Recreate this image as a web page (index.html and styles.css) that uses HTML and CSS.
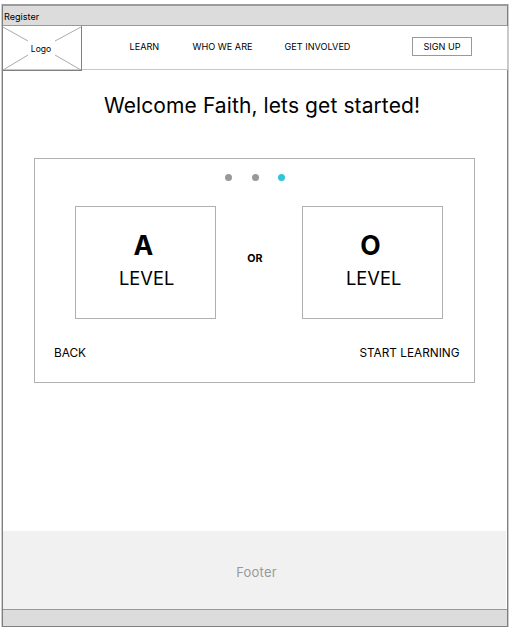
FILE: index.html
```html
<!DOCTYPE html>
<html lang="en">
<head>
<meta charset="utf-8">
<title>Register</title>
<link rel="stylesheet" href="styles.css">
</head>
<body>
<div class="window">
  <div class="titlebar"><span>Register</span></div>
  <header class="header">
    <div class="logo">
      <svg class="logo-cross" width="78" height="43" viewBox="0 0 78 43">
        <path d="M0 0L25 14M52 14L78 0M0 43L25 28M52 28L78 43"/>
      </svg>
      <span class="logo-text">Logo</span>
    </div>
    <nav class="nav">
      <a class="learn">LEARN</a>
      <a class="who">WHO WE ARE</a>
      <a class="involved">GET INVOLVED</a>
    </nav>
    <a class="signup">SIGN UP</a>
  </header>
  <main class="main">
    <h1>Welcome Faith, lets get started!</h1>
    <section class="panel">
      <div class="dots"><i></i><i></i><i class="active"></i></div>
      <div class="choices">
        <div class="choice"><b>A</b><span>LEVEL</span></div>
        <strong class="or">OR</strong>
        <div class="choice"><b>O</b><span>LEVEL</span></div>
      </div>
      <div class="actions"><a class="back">BACK</a><a class="start">START LEARNING</a></div>
    </section>
  </main>
  <footer class="footer"><span>Footer</span></footer>
  <div class="statusbar"></div>
</div>
</body>
</html>
```
FILE: styles.css
```css
* { box-sizing: border-box; }
body {
  margin: 0;
  padding: 4px 0 0 2px;
  background: #fff;
  color: #000;
  font-family: Inter, "Liberation Sans", sans-serif;
}
.window {
  width: 506px;
  height: 623px;
  border: 1px solid #7f7f7f;
  border-top: 2px solid #9c9c9c;
  box-shadow: -1px 0 #ccc, 1px 0 #ccc;
  display: flex;
  flex-direction: column;
}
.titlebar {
  flex: none;
  height: 20px;
  background: #dcdcdc;
  border-bottom: 1px solid #999;
  padding: 5px 0 0 1px;
  font-size: 9.1px;
  line-height: 12px;
}
.header {
  flex: none;
  height: 44px;
  margin: 0 -1px;
  background: #fff;
  border-bottom: 1px solid #c8c8c8;
  border-right: 1px solid #c8c8c8;
  display: flex;
  font-size: 9.15px;
  line-height: 12px;
  white-space: nowrap;
}
.logo {
  flex: none;
  display: grid;
  place-items: center;
  width: 80px;
  height: 45px;
  border: 1px solid #808080;
  border-top: 0;
}
.logo > * { grid-area: 1 / 1; }
.logo-cross { display: block; fill: none; stroke: #aaa; stroke-width: 1; }
.logo-text { font-size: 8.6px; padding: 2px 2px 0 0; }
.nav { display: flex; width: 330px; padding: 15px 0 0 47.5px; }
.learn { width: 63px; }
.who { width: 92px; }
.signup {
  width: 60px;
  height: 19px;
  margin-top: 11px;
  border: 1px solid #999;
  line-height: 18px;
  text-align: center;
}
.main { flex: none; height: 461px; }
h1 {
  margin: 23px 0 0 101px;
  font-size: 21px;
  letter-spacing: 0.1px;
  line-height: 26px;
  font-weight: 400;
  white-space: nowrap;
}
.panel {
  width: 441px;
  height: 225px;
  margin: 39px 0 0 31px;
  border: 1px solid #b0b0b0;
}
.dots { display: flex; gap: 19.5px; padding: 15px 0 0 190px; }
.dots i { width: 7px; height: 7px; border-radius: 50%; background: #999; }
.dots .active { background: #2fc5dc; }
.choices { display: flex; margin: 25px 31px 0 40px; }
.choice {
  width: 141px;
  height: 113px;
  border: 1px solid #b0b0b0;
  display: flex;
  flex-direction: column;
  padding: 23px 0 0 43px;
}
.choice b { width: 49px; text-align: center; font-size: 26.5px; line-height: 31px; }
.choice span { font-size: 18.3px; line-height: 34px; }
.or { width: 86px; padding: 46px 8px 0 0; font-size: 10.7px; line-height: 14px; text-align: center; }
.actions {
  display: flex;
  justify-content: space-between;
  padding: 25px 14.5px 0 19px;
  font-size: 11.8px;
  line-height: 18px;
}
.footer {
  flex: none;
  height: 78px;
  margin-right: 1px;
  padding-left: 4px;
  background: #f1f1f1;
  color: #999;
  text-align: center;
  font-size: 13px;
  letter-spacing: 0.2px;
  line-height: 83px;
}
.statusbar { flex: 1; background: #dcdcdc; border-top: 1px solid #999; }
```
